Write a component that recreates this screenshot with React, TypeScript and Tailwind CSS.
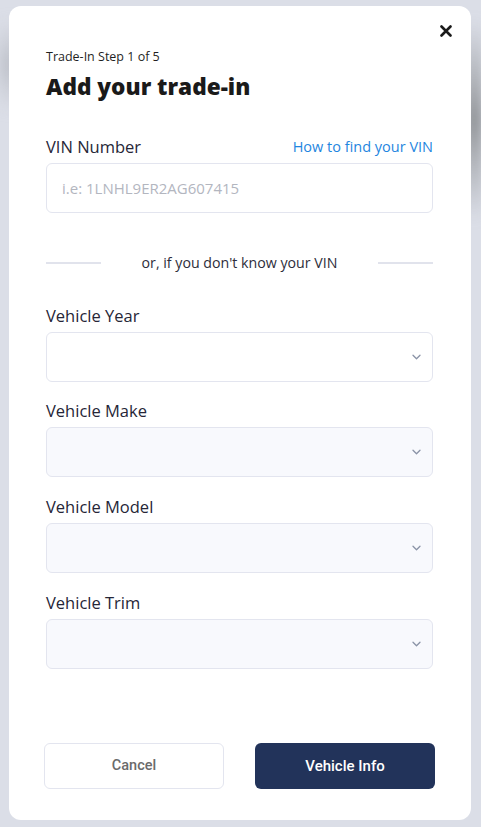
import React from 'react';

const font = { fontFamily: '"Open Sans", "Liberation Sans", sans-serif' };

function Chevron() {
  return (
    <svg width="9" height="6" viewBox="0 0 9 6" fill="none" className="absolute right-[11px] top-1/2 -translate-y-1/2">
      <path d="M1 1.2l3.5 3.5L8 1.2" stroke="#8a93a6" strokeWidth="1.3" strokeLinecap="round" strokeLinejoin="round" />
    </svg>
  );
}

function SelectField({ label, disabled, gap }: { label: string; disabled?: boolean; gap: string }) {
  return (
    <div className={gap}>
      <div className="text-[16.5px] leading-6 font-medium text-[#262637]">{label}</div>
      <div className={`relative mt-[4px] h-[50px] rounded-md border border-[#e3e5ef] ${disabled ? 'bg-[#f8f9fd]' : 'bg-white'}`}>
        <Chevron />
      </div>
    </div>
  );
}

export default function App() {
  return (
    <div className="w-full h-[827px] bg-[#dbdee7] relative overflow-hidden" style={font}>
      <div className="absolute left-0 top-[20px] w-[20px] h-[90px] bg-gradient-to-b from-transparent via-[#b9bcc4] to-transparent blur-sm" />
      <div className="absolute right-0 top-[20px] w-[14px] h-[200px] bg-gradient-to-b from-transparent via-[#6f7273] to-transparent blur-sm" />
      <div className="relative ml-[9px] mr-[10px] pt-[6px]">
        <div className="relative h-[814px] rounded-xl bg-white pl-[37px] pr-[38px] pt-[42px] flex flex-col">
          <button className="absolute right-[19px] top-[19px] w-[12px] h-[12px]">
            <svg width="12" height="12" viewBox="0 0 12 12">
              <path d="M1.5 1.5l9 9M10.5 1.5l-9 9" stroke="#1a1a1a" strokeWidth="2.6" strokeLinecap="round" />
            </svg>
          </button>
          <div className="text-[12.5px] leading-[18px] text-[#1f1f1f]">Trade-In Step 1 of 5</div>
          <h1 className="mt-[7px] text-[22.6px] leading-[28px] font-extrabold text-[#1a1a1a]">Add your trade-in</h1>

          <div className="mt-[34px] flex items-center justify-between">
            <span className="text-[16.5px] leading-6 font-medium text-[#262637]">VIN Number</span>
            <span className="text-[14.5px] leading-6 font-medium text-[#1f86e0]">How to find your VIN</span>
          </div>
          <div className="mt-[4px] h-[50px] rounded-md border border-[#e3e5ef] bg-white flex items-center px-[15px]">
            <span className="text-[15px] text-[#b3b6bf]">i.e: 1LNHL9ER2AG607415</span>
          </div>

          <div className="mt-[40px] h-[20px] flex items-center">
            <div className="w-[55px] h-[2px] bg-[#e1e3ec]" />
            <span className="flex-1 text-center text-[14.2px] text-[#2d2d3a]">or, if you don't know your VIN</span>
            <div className="w-[55px] h-[2px] bg-[#e1e3ec]" />
          </div>

          <SelectField label="Vehicle Year" gap="mt-[31px]" />
          <SelectField label="Vehicle Make" disabled gap="mt-[17px]" />
          <SelectField label="Vehicle Model" disabled gap="mt-[18px]" />
          <SelectField label="Vehicle Trim" disabled gap="mt-[18px]" />

          <div className="mt-auto mb-[31px] -mx-[2px] flex justify-between" style={{ fontFamily: '"Roboto", "Liberation Sans", sans-serif' }}>
            <button className="w-[180px] h-[46px] rounded-md border border-[#e3e5ef] bg-white text-[14.5px] font-medium text-[#6b6b6b]">Cancel</button>
            <button className="w-[180px] h-[46px] rounded-md bg-[#22335a] text-[15px] font-medium text-white">Vehicle Info</button>
          </div>
        </div>
      </div>
    </div>
  );
}
